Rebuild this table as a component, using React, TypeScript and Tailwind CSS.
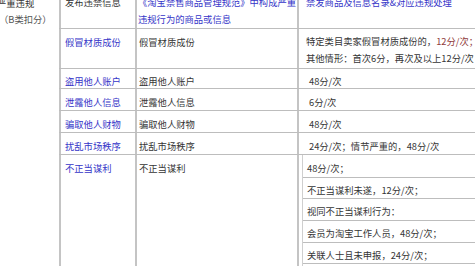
import React from 'react';

const font = { fontFamily: '"Noto Sans CJK SC", "Noto Sans", sans-serif' };

const simpleRows = [
  { name: '盗用他人账户', penalty: '48分/次', h: 'h-[20px]', pt: 'pt-[4px]' },
  { name: '泄露他人信息', penalty: '6分/次', h: 'h-[22px]', pt: 'pt-[5px]' },
  { name: '骗取他人财物', penalty: '48分/次', h: 'h-[22px]', pt: 'pt-[5px]' },
  { name: '扰乱市场秩序', penalty: '24分/次；情节严重的，48分/次', h: 'h-[22px]', pt: 'pt-[5px]' },
];

const subRows = [
  { text: '不正当谋利未遂，12分/次；', h: 'h-[21px]' },
  { text: '视同不正当谋利行为：', h: 'h-[22px]' },
  { text: '会员为淘宝工作人员，48分/次；', h: 'h-[22px]' },
  { text: '关联人士且未申报，24分/次；', h: 'h-[21px]' },
  { text: '', h: 'h-[22px]' },
];

export default function App() {
  return (
    <div
      className="w-[475px] h-[266px] overflow-hidden bg-white text-[9.3px] leading-[16px] text-[#353535]"
      style={font}
    >
      <div className="flex -mt-[6px]">
        {/* 左侧合并列 */}
        <div className="w-[62px] shrink-0 -ml-[3px]">
          <div className="leading-[16px] pt-[1px] text-[#333] whitespace-nowrap">严重违规</div>
          <div className="leading-[16px] pl-[2px] text-[#555] whitespace-nowrap">（B类扣分）</div>
        </div>

        <div className="flex-1 flex flex-col">
          {/* 表头 */}
          <div className="flex h-[35px] border-b border-[#bdbdbd]">
            <div className="w-[76px] shrink-0 border-l-2 border-[#c4c4c4] pl-[4px] leading-[17px] whitespace-nowrap">
              发布违禁信息
            </div>
            <div className="w-[162px] shrink-0 border-l-2 border-[#c4c4c4] pl-[1px] leading-[17px] text-[#3535c8] whitespace-nowrap overflow-hidden">
              《淘宝禁售商品管理规范》中构成严重
              <br />
              违规行为的商品或信息
            </div>
            <div className="flex-1 border-l-2 border-[#c4c4c4] pl-[7px] leading-[17px] text-[#3535c8] whitespace-nowrap">
              禁发商品及信息名录&amp;对应违规处理
            </div>
          </div>

          {/* 假冒材质成份 */}
          <div className="flex h-[40px] border-b border-[#bdbdbd]">
            <div className="w-[76px] shrink-0 border-l-2 border-[#c4c4c4] pl-[4px] pt-[5px] text-[#3535c8]">
              假冒材质成份
            </div>
            <div className="w-[162px] shrink-0 border-l-2 border-[#c4c4c4] pl-[2px] pt-[5px]">
              假冒材质成份
            </div>
            <div className="flex-1 border-l-2 border-[#c4c4c4] pl-[7px] pt-[4px] leading-[16.5px] whitespace-nowrap">
              <div>
                特定类目卖家假冒材质成份的，<span className="text-[#8f3a3a]">12分/次；</span>
              </div>
              <div>其他情形：首次6分，再次及以上12分/次</div>
            </div>
          </div>

          {simpleRows.map((r) => (
            <div key={r.name} className={`flex ${r.h} border-b border-[#bdbdbd]`}>
              <div className={`w-[76px] shrink-0 border-l-2 border-[#c4c4c4] pl-[4px] ${r.pt} text-[#3535c8]`}>
                {r.name}
              </div>
              <div className={`w-[162px] shrink-0 border-l-2 border-[#c4c4c4] pl-[2px] ${r.pt}`}>
                {r.name}
              </div>
              <div className={`flex-1 border-l-2 border-[#c4c4c4] pl-[10px] ${r.pt} whitespace-nowrap`}>
                {r.penalty}
              </div>
            </div>
          ))}

          {/* 不正当谋利 */}
          <div className="flex h-[140px]">
            <div className="w-[76px] shrink-0 border-l-2 border-[#c4c4c4] pl-[4px] pt-[5px] text-[#3535c8]">
              不正当谋利
            </div>
            <div className="w-[162px] shrink-0 border-l-2 border-[#c4c4c4] pl-[2px] pt-[5px]">
              不正当谋利
            </div>
            <div className="flex-1 border-l-2 border-[#c4c4c4] pl-[3px]">
              <div className="border-l border-[#cfcfcf] h-full">
                <div className="h-[23px] border-b border-[#bdbdbd] pl-[4px] pt-[5px] whitespace-nowrap">
                  48分/次；
                </div>
                {subRows.map((s, i) => (
                  <div
                    key={i}
                    className={`${s.h} border-b border-[#bdbdbd] pl-[4px] pt-[4px] whitespace-nowrap`}
                  >
                    {s.text}
                  </div>
                ))}
              </div>
            </div>
          </div>
        </div>
      </div>
    </div>
  );
}
